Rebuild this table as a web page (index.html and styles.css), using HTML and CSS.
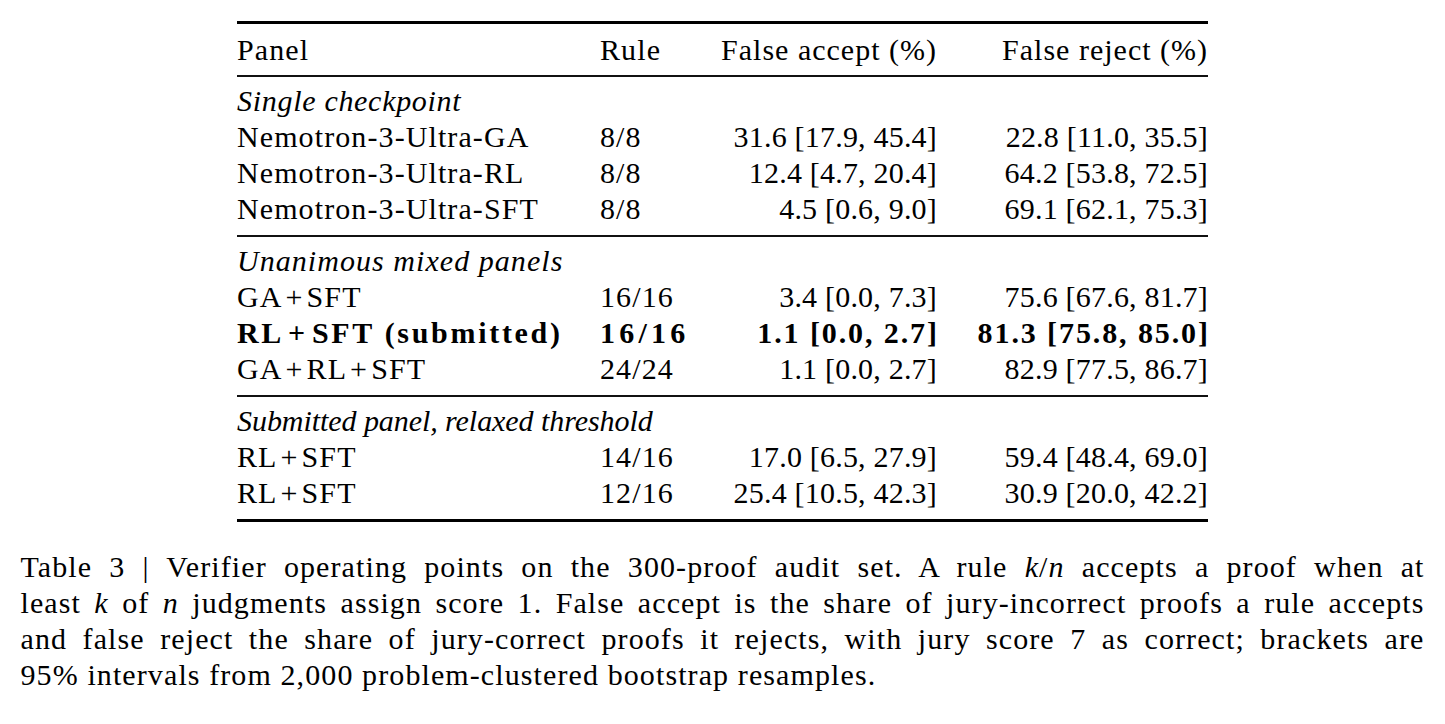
FILE: index.html
```html
<!DOCTYPE html>
<html lang="en">
<head>
<meta charset="utf-8">
<title>Table 3</title>
<link rel="stylesheet" href="styles.css">
</head>
<body>
<div class="page">
  <div class="tab">
    <div class="head grid">
      <div class="c-panel">Panel</div>
      <div class="c-rule">Rule</div>
      <div class="c-num txt">False accept (%)</div>
      <div class="c-num txt">False reject (%)</div>
    </div>
    <div class="section">
      <div class="label">Single checkpoint</div>
      <div class="grid row"><div class="c-panel">Nemotron-3-Ultra-GA</div><div class="c-rule">8/8</div><div class="c-num">31.6 [17.9, 45.4]</div><div class="c-num">22.8 [11.0, 35.5]</div></div>
      <div class="grid row"><div class="c-panel">Nemotron-3-Ultra-RL</div><div class="c-rule">8/8</div><div class="c-num">12.4 [4.7, 20.4]</div><div class="c-num">64.2 [53.8, 72.5]</div></div>
      <div class="grid row"><div class="c-panel">Nemotron-3-Ultra-SFT</div><div class="c-rule">8/8</div><div class="c-num">4.5 [0.6, 9.0]</div><div class="c-num">69.1 [62.1, 75.3]</div></div>
    </div>
    <div class="section">
      <div class="label wide">Unanimous mixed panels</div>
      <div class="grid row"><div class="c-panel">GA<span class="plus">+</span>SFT</div><div class="c-rule">16/16</div><div class="c-num">3.4 [0.0, 7.3]</div><div class="c-num">75.6 [67.6, 81.7]</div></div>
      <div class="grid row bold"><div class="c-panel">RL<span class="plus">+</span>SFT (submitted)</div><div class="c-rule">16/16</div><div class="c-num">1.1 [0.0, 2.7]</div><div class="c-num">81.3 [75.8, 85.0]</div></div>
      <div class="grid row"><div class="c-panel">GA<span class="plus">+</span>RL<span class="plus">+</span>SFT</div><div class="c-rule">24/24</div><div class="c-num">1.1 [0.0, 2.7]</div><div class="c-num">82.9 [77.5, 86.7]</div></div>
    </div>
    <div class="section last">
      <div class="label narrow">Submitted panel, relaxed threshold</div>
      <div class="grid row"><div class="c-panel">RL<span class="plus">+</span>SFT</div><div class="c-rule">14/16</div><div class="c-num">17.0 [6.5, 27.9]</div><div class="c-num">59.4 [48.4, 69.0]</div></div>
      <div class="grid row"><div class="c-panel">RL<span class="plus">+</span>SFT</div><div class="c-rule">12/16</div><div class="c-num">25.4 [10.5, 42.3]</div><div class="c-num">30.9 [20.0, 42.2]</div></div>
    </div>
  </div>
  <p class="caption">
    <span class="line">Table 3 | Verifier operating points on the 300-proof audit set. A rule <i class="m">k</i>/<i class="m">n</i> accepts a proof when at</span>
    <span class="line">least <i class="m">k</i> of <i class="m">n</i> judgments assign score 1. False accept is the share of jury-incorrect proofs a rule accepts</span>
    <span class="line">and false reject the share of jury-correct proofs it rejects, with jury score 7 as correct; brackets are</span>
    <span class="line end">95% intervals from 2,000 problem-clustered bootstrap resamples.</span>
  </p>
</div>
</body>
</html>
```
FILE: styles.css
```css
html, body {
  margin: 0;
  padding: 0;
  background: #fff;
}
.page {
  width: 1445px;
  padding-top: 21px;
  font-size: 30px;
  color: #000;
}
.c-panel, .c-rule, .c-num, .label, .caption, .line, .m, .plus {
  font-family: "Liberation Serif", "Times New Roman", serif;
}
.tab {
  width: 971px;
  margin: 0 auto;
  border-top: 3px solid #000;
  border-bottom: 3px solid #000;
}
.grid {
  display: grid;
  grid-template-columns: 363px 120px 217px 271px;
  line-height: 36px;
  height: 36px;
  white-space: nowrap;
}
.head {
  padding: 8px 0 7px;
  border-bottom: 2px solid #111;
}
.c-panel, .c-rule {
  letter-spacing: 1.1px;
}
.plus {
  margin: 0 3px;
}
.c-num {
  text-align: right;
  letter-spacing: 0.2px;
}
.c-num.txt {
  letter-spacing: 1px;
}
.section {
  padding: 6px 0 8px;
  border-bottom: 2px solid #111;
}
.section.last {
  border-bottom: none;
}
.label {
  font-style: italic;
  line-height: 36px;
  height: 36px;
  letter-spacing: 0.7px;
  white-space: nowrap;
}
.label.wide {
  letter-spacing: 1.05px;
}
.label.narrow {
  letter-spacing: -0.06px;
}
.bold .c-panel,
.bold .c-rule,
.bold .c-num {
  font-weight: bold;
}
.bold .c-panel {
  letter-spacing: 2.7px;
}
.bold .plus {
  margin: 0 4px;
}
.bold .c-rule {
  letter-spacing: 4.2px;
}
.bold .c-num {
  letter-spacing: 1.9px;
  margin-right: -1.9px;
}
.caption {
  width: 1404px;
  margin: 27px auto 0;
  line-height: 36px;
  letter-spacing: 1.1px;
}
.line {
  display: block;
  text-align: justify;
  text-align-last: justify;
  white-space: nowrap;
}
.line.end {
  text-align-last: left;
}
.m {
  font-style: italic;
}
```
